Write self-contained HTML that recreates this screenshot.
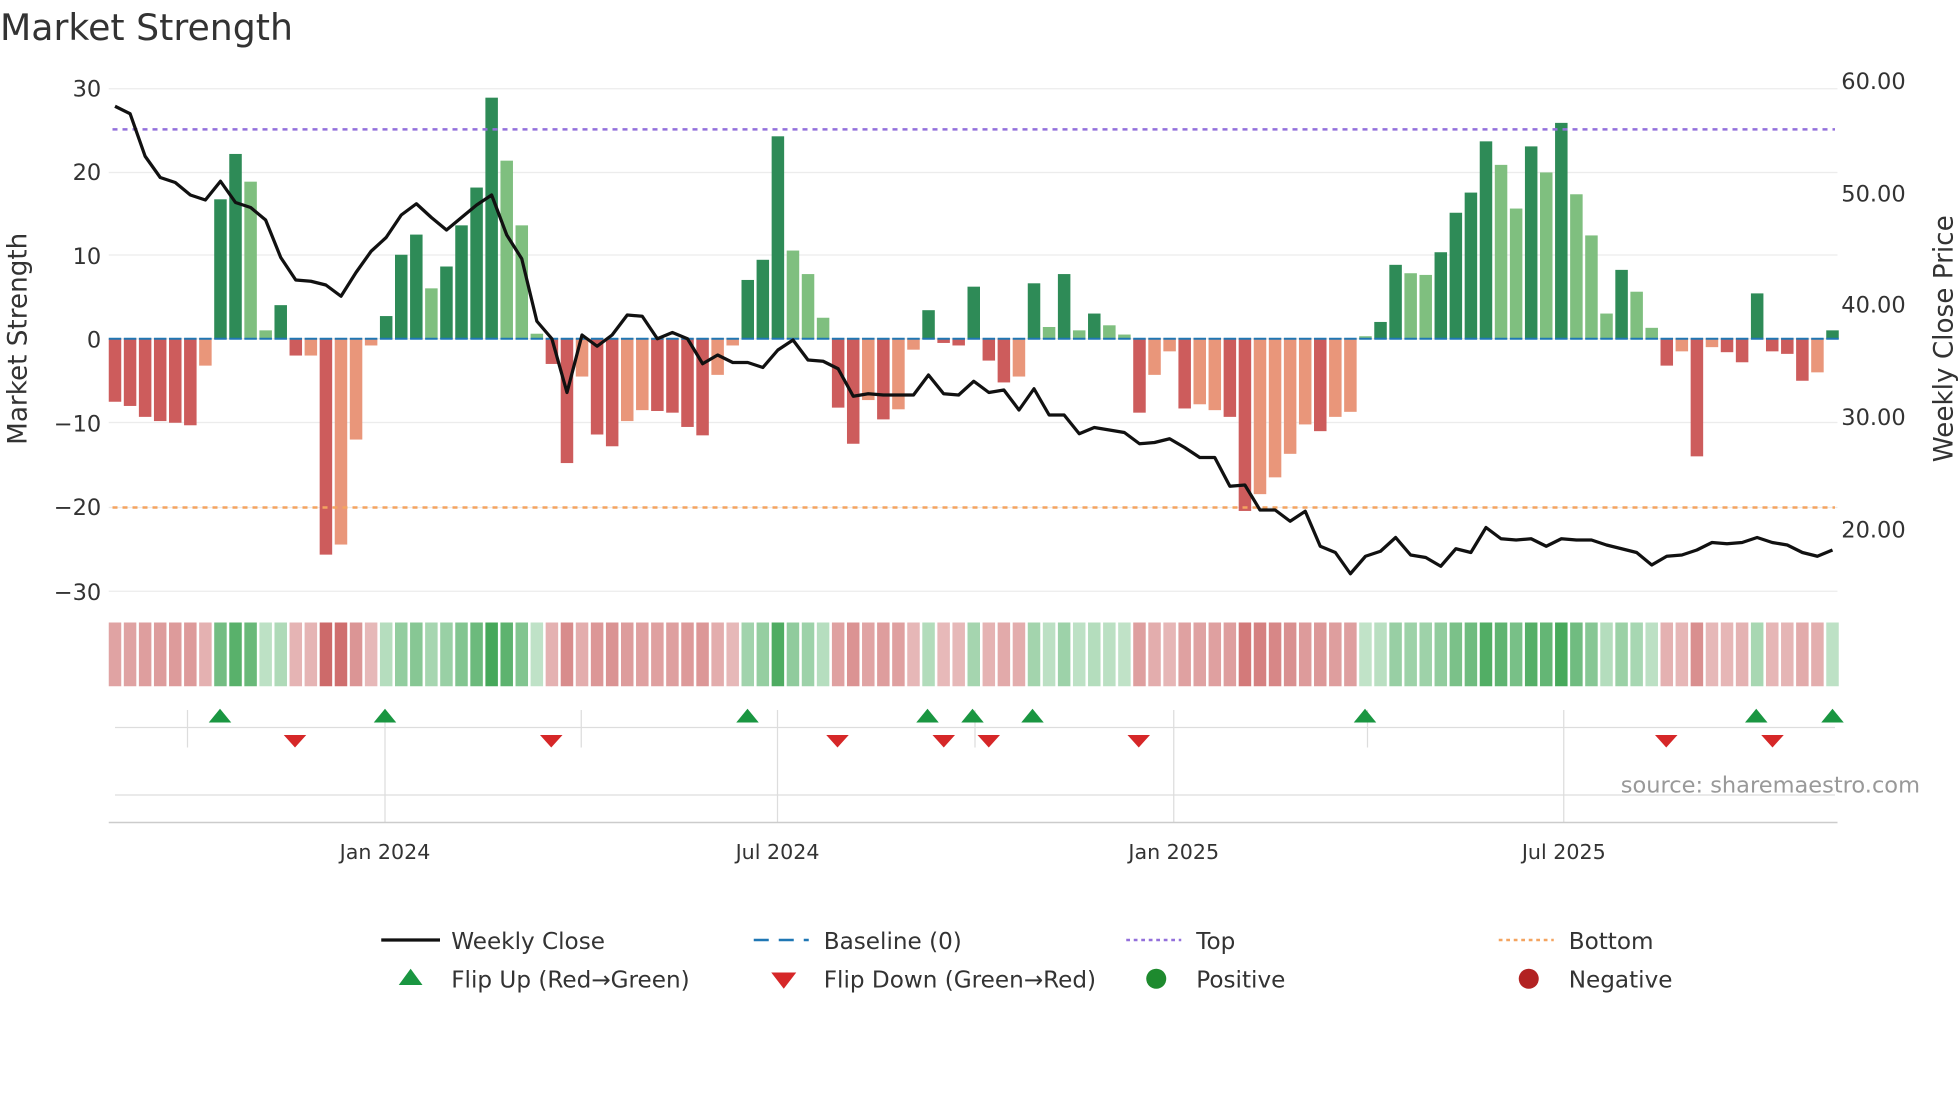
<!DOCTYPE html>
<html><head><meta charset="utf-8"><style>
html,body{margin:0;padding:0;background:#fff;width:1960px;height:1102px;overflow:hidden}
svg{display:block}
text{font-family:"DejaVu Sans","Liberation Sans",sans-serif;fill:#333}
</style></head><body>
<svg id="s" width="1960" height="1102" viewBox="0 0 1568 881.6" xmlns="http://www.w3.org/2000/svg">
<text x="0" y="32" font-size="29">Market Strength</text>
<g id="grid" stroke="#ececec" stroke-width="1"></g>
<g font-size="18" text-anchor="end">
<text x="81" y="77">30</text><text x="81" y="144">20</text><text x="81" y="211">10</text><text x="81" y="278">0</text>
<text x="81" y="345">−10</text><text x="81" y="412">−20</text><text x="81" y="480">−30</text>
</g>
<g font-size="18">
<text x="1473" y="71">60.00</text><text x="1473" y="161">50.00</text><text x="1473" y="250">40.00</text>
<text x="1473" y="340">30.00</text><text x="1473" y="430">20.00</text>
</g>
<text font-size="21" transform="translate(21,271) rotate(-90)" text-anchor="middle">Market Strength</text>
<text font-size="21" transform="translate(1562,271) rotate(-90)" text-anchor="middle">Weekly Close Price</text>
<g id="bars"></g>
<g id="base"></g>
<line x1="90" y1="103.5" x2="1468" y2="103.5" stroke="#9370db" stroke-width="2" stroke-dasharray="4,4"/>
<line x1="90" y1="406" x2="1468" y2="406" stroke="#f4a460" stroke-width="2" stroke-dasharray="4,4"/>
<polyline id="close" fill="none" stroke="#111" stroke-width="2.6" stroke-linejoin="round"/>
<g id="heat"></g>
<g stroke="#ddd" stroke-width="1">
<line x1="92" y1="582" x2="1468" y2="582"/>
<line x1="92" y1="636" x2="1468" y2="636"/>
<line x1="150" y1="568" x2="150" y2="598"/><line x1="308" y1="568" x2="308" y2="658"/><line x1="465" y1="568" x2="465" y2="598"/>
<line x1="622" y1="568" x2="622" y2="658"/><line x1="780" y1="568" x2="780" y2="598"/><line x1="939" y1="568" x2="939" y2="658"/>
<line x1="1094" y1="568" x2="1094" y2="598"/><line x1="1251" y1="568" x2="1251" y2="658"/>
</g>
<line x1="87" y1="658" x2="1470" y2="658" stroke="#ccc" stroke-width="1.2"/>
<g id="flips"></g>
<text x="1536" y="634" font-size="18" text-anchor="end" style="fill:#999">source: sharemaestro.com</text>
<g font-size="16.5" text-anchor="middle">
<text x="308" y="687">Jan 2024</text><text x="622" y="687">Jul 2024</text><text x="939" y="687">Jan 2025</text><text x="1251" y="687">Jul 2025</text>
</g>
<g font-size="18.5">
<line x1="305" y1="752" x2="352" y2="752" stroke="#111" stroke-width="2.6"/><text x="361" y="759">Weekly Close</text>
<line x1="603" y1="752" x2="647" y2="752" stroke="#1f77b4" stroke-width="2" stroke-dasharray="12,8"/><text x="659" y="759">Baseline (0)</text>
<line x1="901" y1="752" x2="945" y2="752" stroke="#9370db" stroke-width="2" stroke-dasharray="3,3"/><text x="957" y="759">Top</text>
<line x1="1199" y1="752" x2="1243" y2="752" stroke="#f4a460" stroke-width="2" stroke-dasharray="3,3"/><text x="1255" y="759">Bottom</text>
<polygon points="319,788 338,788 328.5,775" fill="#1a9641"/><text x="361" y="790">Flip Up (Red→Green)</text>
<polygon points="617,778 637,778 627,791" fill="#d62728"/><text x="659" y="790">Flip Down (Green→Red)</text>
<circle cx="925" cy="783" r="8" fill="#1e8a2e"/><text x="957" y="790">Positive</text>
<circle cx="1223" cy="783" r="8" fill="#b22222"/><text x="1255" y="790">Negative</text>
</g>
</svg>
<script>
var NS="http://www.w3.org/2000/svg";
function el(p,t,a){var e=document.createElementNS(NS,t);for(var k in a)e.setAttribute(k,a[k]);document.getElementById(p).appendChild(e);return e;}
[71,138,204,271,338,406,473].forEach(function(y){el("grid","line",{x1:87,x2:1470,y1:y,y2:y});});
var V=[-7.5,-8,-9.3,-9.8,-10,-10.3,-3.2,16.6,22,18.7,1,4,-2,-2,-25.7,-24.5,-12,-0.8,2.7,10,12.4,6,8.6,13.5,18,28.7,21.2,13.5,0.6,-3,-14.8,-4.5,-11.4,-12.8,-9.8,-8.5,-8.6,-8.8,-10.5,-11.5,-4.3,-0.8,7,9.4,24.1,10.5,7.7,2.5,-8.2,-12.5,-7.3,-9.6,-8.4,-1.3,3.4,-0.5,-0.8,6.2,-2.6,-5.2,-4.5,6.6,1.4,7.7,1,3,1.6,0.5,-8.8,-4.3,-1.5,-8.3,-7.8,-8.5,-9.3,-20.5,-18.5,-16.5,-13.7,-10.2,-11,-9.3,-8.7,0.3,2,8.8,7.8,7.6,10.3,15,17.4,23.5,20.7,15.5,22.9,19.8,25.7,17.2,12.3,3,8.2,5.6,1.3,-3.2,-1.5,-14,-1,-1.6,-2.8,5.4,-1.5,-1.8,-5,-4,1];
var L={6:1,9:1,10:1,13:1,15:1,16:1,17:1,21:1,26:1,27:1,28:1,31:1,34:1,35:1,40:1,41:1,45:1,46:1,47:1,50:1,52:1,53:1,60:1,62:1,64:1,66:1,67:1,69:1,70:1,72:1,73:1,76:1,77:1,78:1,79:1,81:1,82:1,83:1,86:1,87:1,92:1,93:1,95:1,97:1,98:1,99:1,101:1,102:1,104:1,106:1,113:1};
var dx=(1466-92)/114;
function mix(a,b,t){return "rgb("+[0,1,2].map(function(i){return Math.round(a[i]+(b[i]-a[i])*t)}).join(",")+")";}
V.forEach(function(v,i){
 var x=92+i*dx, y0=271, h=v*6.72;
 var c = v>=0 ? (L[i]?"#7fbf7f":"#2e8b57") : (L[i]?"#e9967a":"#cd5c5c");
 el("bars","rect",{x:x-5,y:v>=0?y0-h:y0,width:10,height:Math.abs(h),fill:c});
 el("base","line",{x1:x-5,x2:x+5,y1:271,y2:271,stroke:"#1f77b4","stroke-width":1.6});
 var t=Math.min(1,Math.abs(v)/26);
 var hc = v>=0 ? mix([208,234,214],[70,168,90],Math.min(1,0.1+t*0.9)) : mix([240,214,214],[205,105,105],Math.min(1,0.25+t*0.75));
 el("heat","rect",{x:x-5,y:498,width:10,height:51,fill:hc});
});
var P=[85,91,125,142,146,156,160,145,162,166,176,206,224,225,228,237,218,201,190,172,163,174,184,174,164,156,188,207,257,271,314,268,277,268,252,253,271,266,271,291,284,290,290,294,280,272,288,289,295,317,315,316,316,316,300,315,316,305,314,312,328,311,332,332,347,342,344,346,355,354,351,358,366,366,389,388,408,408,417,409,437,442,459,445,441,430,444,446,453,439,442,422,431,432,431,437,431,432,432,436,439,442,452,445,444,440,434,435,434,430,434,436,442,445,440];
document.getElementById("close").setAttribute("points",P.map(function(y,i){return (92+i*dx).toFixed(1)+","+y}).join(" "));
[176,308,598,742,778,826,1092,1405,1466].forEach(function(x){el("flips","polygon",{points:(x-9)+",578 "+(x+9)+",578 "+x+",567",fill:"#1a9641"});});
[236,441,670,755,791,911,1333,1418].forEach(function(x){el("flips","polygon",{points:(x-9)+",588 "+(x+9)+",588 "+x+",598",fill:"#d62728"});});
</script>
</body></html>
